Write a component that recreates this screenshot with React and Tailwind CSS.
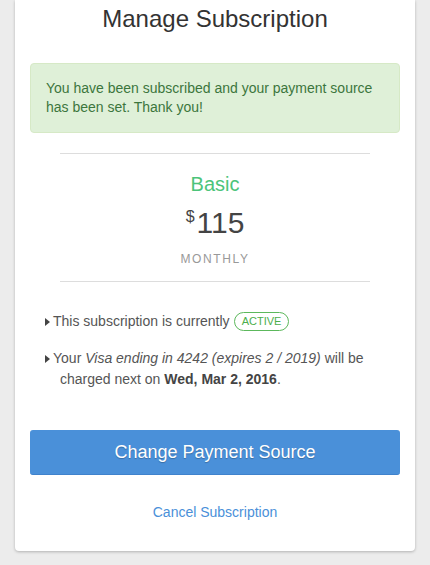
function Caret() {
  return (
    <svg width="5" height="8" viewBox="0 0 5 8" className="mr-[3px] inline-block align-[0px]">
      <path d="M0 0 L5 4 L0 8 Z" fill="#444" />
    </svg>
  );
}

export default function App() {
  return (
    <div
      className="min-h-[565px] bg-[#ececec] px-[15px] pb-[14px]"
      style={{ fontFamily: '"Liberation Sans", Arial, sans-serif' }}
    >
      <div className="rounded-b-[4px] bg-white px-[15px] pb-[30px] pt-[6px] shadow-[0_1px_3px_rgba(0,0,0,0.25)]">
        <h1 className="text-center text-[24px] leading-[26px] text-[#333]">Manage Subscription</h1>

        <div className="mt-[31px] rounded-[4px] border border-[#d6e9c6] bg-[#dff0d8] px-[15px] py-[15px] text-[14px] leading-[19px] text-[#3c763d]">
          You have been subscribed and your payment source has been set. Thank you!
        </div>

        <div className="mx-[30px] mt-[20px] border-t border-[#ddd] pb-[15px] pt-[19px] text-center">
          <div className="text-[20px] leading-[22px] text-[#4cc47a]">Basic</div>
          <div className="mt-[15px] flex items-start justify-center text-[#444]">
            <span className="mr-[2px] text-[16px] leading-[14px]">$</span>
            <span className="text-[30px] leading-[26px]">115</span>
          </div>
          <div className="mt-[16px] text-[12px] leading-[14px] tracking-[1.6px] text-[#999]">MONTHLY</div>
        </div>
        <div className="mx-[30px] border-t border-[#ddd]" />

        <ul className="mt-[29px] pl-[30px] pr-[10px] text-[14px] leading-[21px] text-[#555]">
          <li className="-ml-[15px] flex items-center">
            <Caret />
            <span>This subscription is currently</span>
            <span className="ml-[4px] rounded-full border border-[#5cb85c] px-[7px] text-[11px] leading-[17px] text-[#4cae4c]">
              ACTIVE
            </span>
          </li>
          <li className="mt-[16px] -indent-[15px]">
            <Caret />
            Your <em>Visa ending in 4242 (expires 2 / 2019)</em> will be charged next on{' '}
            <strong className="text-[#444]">Wed, Mar 2, 2016</strong>.
          </li>
        </ul>

        <button className="mt-[40px] block h-[45px] w-full rounded-[3px] border-b border-[#3f82cc] bg-[#4a90d9] text-[18px] text-white [text-shadow:0_1px_1px_rgba(0,0,0,0.25)]">
          Change Payment Source
        </button>

        <div className="mt-[28px] text-center text-[14px] leading-[18px] text-[#4a90d9]">Cancel Subscription</div>
      </div>
    </div>
  );
}
